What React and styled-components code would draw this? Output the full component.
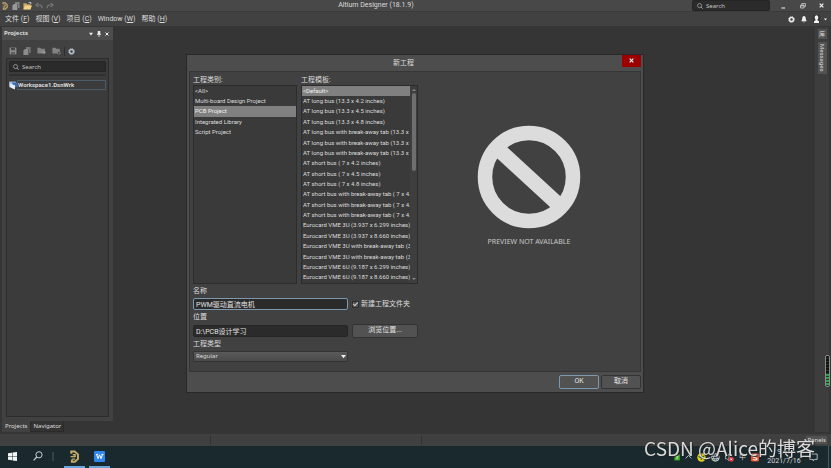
import React, { useState } from "react";
import styled, { createGlobalStyle } from "styled-components";

const categories = [
  "<All>",
  "Multi-board Design Project",
  "PCB Project",
  "Integrated Library",
  "Script Project",
];

const templates = [
  "<Default>",
  "AT long bus (13.3 x 4.2 inches)",
  "AT long bus (13.3 x 4.5 inches)",
  "AT long bus (13.3 x 4.8 inches)",
  "AT long bus with break-away tab (13.3 x 4.2 inches)",
  "AT long bus with break-away tab (13.3 x 4.5 inches)",
  "AT long bus with break-away tab (13.3 x 4.8 inches)",
  "AT short bus ( 7 x 4.2 inches)",
  "AT short bus ( 7 x 4.5 inches)",
  "AT short bus ( 7 x 4.8 inches)",
  "AT short bus with break-away tab ( 7 x 4.2 inches)",
  "AT short bus with break-away tab ( 7 x 4.5 inches)",
  "AT short bus with break-away tab ( 7 x 4.8 inches)",
  "Eurocard VME 3U (3.937 x 6.299 inches)",
  "Eurocard VME 3U (3.937 x 8.660 inches)",
  "Eurocard VME 3U with break-away tab (3.937 x 6.299 inches)",
  "Eurocard VME 3U with break-away tab (3.937 x 8.660 inches)",
  "Eurocard VME 6U (9.187 x 6.299 inches)",
  "Eurocard VME 6U (9.187 x 8.660 inches)",
];

const menus = [
  ["文件", "F"],
  ["视图", "V"],
  ["项目", "C"],
  ["Window", "W"],
  ["帮助", "H"],
];

/* icons */

const AltiumIcon = ({ size }) => (
  <svg width={size} height={size} viewBox="0 0 12 12" fill="none" stroke="#c9ab68" strokeWidth="1.8">
    <path d="M3 3.4V1.4h3.2L9.2 4v4.2L6.4 10.8H3.6V8.8" />
    <path d="M2.4 6.2h4.2V4.4H4.4M3.8 8.4h2.8" strokeWidth="1.2" />
  </svg>
);

const PagesIcon = ({ color = "#8c8c8c" }) => (
  <svg width="8" height="8" viewBox="0 0 8 8">
    <path d="M3 0h4.6v6H6V2H3z" fill={color} opacity="0.7" />
    <path d="M0.4 3.6L2 2h3.4v6H0.4z" fill={color} />
  </svg>
);

const FolderOpenIcon = () => (
  <svg width="9" height="8" viewBox="0 0 9 8">
    <path d="M0.4 1.2h3l0.8 1h3.4v5H0.4z" fill="#c9a45e" />
    <path d="M2 3.6h7L7.4 7.6H0.4z" fill="#f3d089" />
    <path d="M5.6 0.4h2.2v1.8" fill="none" stroke="#e8e8e8" strokeWidth="0.8" />
  </svg>
);

const UndoIcon = ({ flip }) => (
  <svg width="8" height="8" viewBox="0 0 8 8">
    <g transform={flip ? "matrix(-1 0 0 1 8 0)" : undefined}>
      <path d="M3.4 0.8L0.8 3l2.6 2.2" fill="none" stroke="#777" strokeWidth="1.1" />
      <path d="M1 3h3.4c1.8 0 2.6 1.2 2.6 3.2" fill="none" stroke="#777" strokeWidth="1.1" />
    </g>
  </svg>
);

const SearchIcon = ({ size = 6, color = "#aaa" }) => (
  <svg width={size} height={size} viewBox="0 0 8 8" fill="none" stroke={color}>
    <circle cx="3.4" cy="3.4" r="2.7" />
    <path d="M5.4 5.4L7.6 7.6" strokeWidth="1.2" />
  </svg>
);

const TaskSearchIcon = () => (
  <svg width="10" height="10" viewBox="0 0 10 10" fill="none" stroke="#c8cfd1">
    <circle cx="6" cy="3.8" r="3.1" />
    <path d="M3.8 6L0.6 9.4" strokeWidth="1.2" />
  </svg>
);

const SaveIcon = () => (
  <svg width="8" height="8" viewBox="0 0 8 8">
    <path d="M0.6 0.6h6.8v6.8H0.6z" fill="#8c8c8c" />
    <path d="M2 1h4v2.2H2zM2.2 5h3.6v2.4H2.2z" fill="#484848" />
    <path d="M2.6 5.6h2.8v0.8H2.6z" fill="#8c8c8c" />
  </svg>
);

const FolderIcon = ({ gear }) => (
  <svg width="9" height="8" viewBox="0 0 9 8">
    <path d="M0.4 0.8h3l0.8 1h3.6v4.6H0.4z" fill="#828282" />
    {gear ? (
      <circle cx="6.8" cy="5.8" r="1.4" fill="#444" stroke="#828282" strokeWidth="0.9" />
    ) : (
      <path d="M4 4.4h2.6V3L9 5.2 6.6 7.4V6H4z" fill="#949494" />
    )}
  </svg>
);

const GearIcon = ({ color, size = 7 }) => (
  <svg width={size} height={size} viewBox="0 0 8 8" fill="none" stroke={color}>
    <circle cx="4" cy="4" r="2.3" strokeWidth="1.6" />
    <circle cx="4" cy="4" r="3.4" strokeWidth="0.9" strokeDasharray="1.33 1.33" />
  </svg>
);

const BellIcon = () => (
  <svg width="6" height="7" viewBox="0 0 6 7" fill="#eee">
    <path d="M3 0c1.4 0.3 1.8 1.3 1.8 2.6 0 1.3 0.4 1.9 1 2.6H0.2c0.6-0.7 1-1.3 1-2.6C1.2 1.3 1.6 0.3 3 0zM2.2 5.8h1.6L3 6.8z" />
  </svg>
);

const UserIcon = () => (
  <svg width="7" height="8" viewBox="0 0 7 8">
    <rect width="7" height="8" fill="#333" />
    <path d="M3.5 0.2a1.9 2.3 0 0 1 1 4.2v0.9L6 6.2V8H1V6.2l1.5-0.9V4.4a1.9 2.3 0 0 1 1-4.2z" fill="#f2f2f2" />
  </svg>
);

const CrossIcon = ({ size = 5 }) => (
  <svg width={size} height={size} viewBox="0 0 6 6" stroke="#f0f0f0" strokeWidth="1.5">
    <path d="M0.8 0.8l4.4 4.4M5.2 0.8L0.8 5.2" />
  </svg>
);

const RestoreIcon = () => (
  <svg width="6" height="6" viewBox="0 0 6 6" fill="none" stroke="#ccc" strokeWidth="0.9">
    <path d="M1.8 1.8V0.6h3.6v2.8H4.2M0.6 2.2h3.4v2.8H0.6zM0.6 2.8h3.4" />
  </svg>
);

const MinimizeIcon = () => (
  <svg width="5" height="6" viewBox="0 0 5 6">
    <path d="M0.5 5h3.6" stroke="#ddd" strokeWidth="1.2" />
  </svg>
);

const CaretIcon = ({ size = 4 }) => (
  <svg width={size} height={size} viewBox="0 0 4 4">
    <path d="M0 0.8h4L2 3.4z" fill="#eee" />
  </svg>
);

const PinIcon = () => (
  <svg width="4" height="6" viewBox="0 0 4 6">
    <path d="M0.8 0h2.4v2.8H4v0.9H2.4V6H1.6V3.7H0V2.8h0.8z" fill="#eee" />
  </svg>
);

const WorkspaceIcon = () => (
  <svg width="8" height="9" viewBox="0 0 8 9">
    <path d="M0.2 0.6h6.6v5.6H0.2z" fill="#a9c3e6" />
    <path d="M3 1.4h5v4.6H4.4z" fill="#3c6fb4" />
    <path d="M0.6 2.4l5.4 1.8v4.4L1.6 6.8z" fill="#e9eef6" />
  </svg>
);

const NoPreviewIcon = () => (
  <svg width="104" height="104" viewBox="0 0 104 104" fill="none" stroke="#dcdcdc">
    <circle cx="52" cy="52" r="44" strokeWidth="14.5" />
    <path d="M21 24L83 81" strokeWidth="15" />
  </svg>
);

const WindowsIcon = () => (
  <svg width="9" height="9" viewBox="0 0 9 9" fill="#f4f6f6">
    <path d="M0 1.3L4 0.7v3.5H0zM4.5 0.6L9 0v4.2H4.5zM0 4.7h4v3.6L0 7.7zM4.5 4.7H9V9L4.5 8.4z" />
  </svg>
);

const WpsIcon = () => (
  <svg width="11" height="11" viewBox="0 0 11 11">
    <rect width="11" height="11" rx="1" fill="#2f86ee" />
    <path d="M2 3.4h2M7.4 3.4h2M2.6 3.4l1.4 4.2 1.5-3.8L7 7.6l1.6-4.2" fill="none" stroke="#fff" />
  </svg>
);

const ShieldTrayIcon = () => (
  <svg width="6" height="8" viewBox="0 0 6 8">
    <path d="M0.4 1.4h5.4v6H0.4z" fill="#3fb32b" />
    <path d="M3 2.4v3.8M1.8 3.4h2.6" stroke="#d8f5cb" strokeWidth="0.9" />
  </svg>
);

const ChevronUpIcon = () => (
  <svg width="7" height="8" viewBox="0 0 7 8">
    <path d="M0.6 5.4l2.9-3 2.9 3" fill="none" stroke="#b9c3c5" />
  </svg>
);

const YellowTrayIcon = () => (
  <svg width="9" height="9" viewBox="0 0 9 9">
    <circle cx="4.5" cy="4.5" r="4.2" fill="#e8d21f" />
    <path d="M1.4 3.4l2.8 1.4 3.4-2M4.3 4.8V7" fill="none" stroke="#31662a" strokeWidth="1.1" />
  </svg>
);

const GlobeIcon = () => (
  <svg width="9" height="9" viewBox="0 0 9 9" fill="none" stroke="#d5dadb" strokeWidth="0.9">
    <circle cx="4.4" cy="4.4" r="3.8" />
    <path d="M0.6 3.2h7.6M0.6 5.8h7.6M4.4 0.6c-2.4 2.4-2.4 5.2 0 7.6 2.4-2.4 2.4-5.2 0-7.6z" />
  </svg>
);

const MutedIcon = () => (
  <svg width="9" height="9" viewBox="0 0 9 9">
    <path d="M0.5 3h1.4l2-1.8v6.4l-2-1.8H0.5z" fill="none" stroke="#b9c3c5" strokeWidth="0.8" />
    <circle cx="6.3" cy="6.3" r="2.5" fill="#d9343c" />
    <path d="M5.4 5.4l1.8 1.8M7.2 5.4L5.4 7.2" stroke="#fff" strokeWidth="0.8" />
  </svg>
);

const SogouIcon = () => (
  <svg width="8" height="9" viewBox="0 0 8 9">
    <rect y="0.6" width="8" height="8" rx="1.4" fill="#e8502a" />
    <path d="M6.2 2.6C4.4 1.6 2 2 2 3.4c0 1.6 4 0.8 4 2.4 0 1.4-2.6 1.6-4.2 0.6" fill="none" stroke="#fff" strokeWidth="1.1" />
  </svg>
);

const NoticeIcon = () => (
  <svg width="9" height="9" viewBox="0 0 9 9" fill="none" stroke="#aeb9bb">
    <path d="M0.8 1h7.4v5.4H5.6L4.2 8V6.4H0.8z" />
  </svg>
);

function ListBox({ label, items, initial, scroll }) {
  const [selected, setSelected] = useState(initial);

  return (
    <ListColumn $wide={scroll}>
      <Label as="span">{label}</Label>
      <ListFrame>
        <Rows aria-label={label}>
          {items.map((item, i) => (
            <Row key={i} type="button" $selected={i === selected} onClick={() => setSelected(i)}>
              {item}
            </Row>
          ))}
        </Rows>
        {scroll && (
          <ScrollTrack>
            <ScrollArrow $up />
            <ScrollThumb />
            <ScrollArrow />
          </ScrollTrack>
        )}
      </ListFrame>
    </ListColumn>
  );
}

function NewProjectDialog() {
  return (
    <Dialog role="dialog" aria-label="新工程">
      <DialogTitle>
        <span>新工程</span>
        <CloseButton type="button" aria-label="Close">
          <CrossIcon />
        </CloseButton>
      </DialogTitle>
      <DialogBody>
        <Form>
          <Lists>
            <ListBox label="工程类别:" items={categories} initial={2} />
            <ListBox label="工程模板:" items={templates} initial={0} scroll />
          </Lists>
          <Fields>
            <Label htmlFor="name">名称</Label>
            <TextInput id="name" defaultValue="PWM驱动直流电机" $focused />
            <CheckLabel>
              <CheckBox type="checkbox" defaultChecked />
              新建工程文件夹
            </CheckLabel>
            <Label htmlFor="place">位置</Label>
            <TextInput id="place" defaultValue="D:\PCB设计学习" />
            <Button type="button">浏览位置...</Button>
            <Label htmlFor="kind">工程类型</Label>
            <SelectWrap>
              <Select id="kind" defaultValue="Regular">
                <option>Regular</option>
              </Select>
              <SelectArrow>
                <CaretIcon size={5} />
              </SelectArrow>
            </SelectWrap>
          </Fields>
        </Form>
        <Preview>
          <NoPreviewIcon />
          <span>PREVIEW NOT AVAILABLE</span>
        </Preview>
      </DialogBody>
      <DialogFooter>
        <Button type="button" $primary>OK</Button>
        <Button type="button">取消</Button>
      </DialogFooter>
    </Dialog>
  );
}

function App() {
  return (
    <Screen>
      <GlobalStyle />
      <TitleBar>
        <QuickTools>
          <AltiumIcon size={8} />
          <PagesIcon color="#999" />
          <FolderOpenIcon />
          <UndoIcon />
          <UndoIcon flip />
        </QuickTools>
        <AppTitle>Altium Designer (18.1.9)</AppTitle>
        <TitleRight>
          <TitleSearch>
            <SearchIcon />
            <input aria-label="Search" placeholder="Search" />
          </TitleSearch>
          <WindowButton type="button" aria-label="Minimize"><MinimizeIcon /></WindowButton>
          <WindowButton type="button" aria-label="Restore"><RestoreIcon /></WindowButton>
          <WindowButton type="button" aria-label="Close"><CrossIcon /></WindowButton>
        </TitleRight>
      </TitleBar>

      <MenuBar>
        {menus.map(([name, key]) => (
          <MenuItem key={key} type="button">
            {name} (<u>{key}</u>)
          </MenuItem>
        ))}
        <MenuIcons>
          <GearIcon color="#eee" />
          <BellIcon />
          <UserGroup>
            <UserIcon />
            <CaretIcon size={3} />
          </UserGroup>
        </MenuIcons>
      </MenuBar>

      <Workspace>
        <Side>
          <Panel>
            <PanelHeader>
              <b>Projects</b>
              <CaretIcon />
              <PinIcon />
              <CrossIcon size={4} />
            </PanelHeader>
            <PanelTools>
              <SaveIcon />
              <PagesIcon />
              <FolderIcon />
              <FolderIcon gear />
              <Divider />
              <GearIcon color="#b4c3cd" />
            </PanelTools>
            <Tree>
              <PanelSearch>
                <SearchIcon />
                <input aria-label="Search projects" placeholder="Search" />
              </PanelSearch>
              <TreeLine />
              <TreeItem>
                <WorkspaceIcon />
                <b>Workspace1.DsnWrk</b>
              </TreeItem>
            </Tree>
          </Panel>
          <Tabs>
            <Tab type="button" $active>Projects</Tab>
            <Tab type="button">Navigator</Tab>
          </Tabs>
        </Side>
        <RightBar>
          <SideTab type="button">库</SideTab>
          <SideTab type="button">Messages</SideTab>
        </RightBar>
      </Workspace>

      <StatusBar>
        <StatusCell />
        <StatusCell />
        <StatusCell $last>
          <PanelsButton type="button">Panels</PanelsButton>
        </StatusCell>
      </StatusBar>

      <TaskBar>
        <TaskButton type="button" aria-label="Start"><WindowsIcon /></TaskButton>
        <TaskButton type="button" aria-label="Search"><TaskSearchIcon /></TaskButton>
        <TaskDivider />
        <TaskButton type="button" aria-label="Altium Designer" $open><AltiumIcon size={13} /></TaskButton>
        <TaskButton type="button" aria-label="WPS" $open><WpsIcon /></TaskButton>
        <Tray>
          <ShieldTrayIcon />
          <ChevronUpIcon />
          <YellowTrayIcon />
          <GlobeIcon />
          <MutedIcon />
          <span>中</span>
          <SogouIcon />
          <Clock>
            <span>9:41</span>
            <span>2021/7/16</span>
          </Clock>
          <NoticeIcon />
        </Tray>
      </TaskBar>

      <Overlay>
        <NewProjectDialog />
      </Overlay>
      <Meter />
      <Watermark>CSDN @Alice的博客</Watermark>
    </Screen>
  );
}

export default App;

const GlobalStyle = createGlobalStyle`
  * {
    box-sizing: border-box;
  }

  body {
    margin: 0;
    background: #353535;
  }

  body, button, input, select {
    font-family: Roboto, "Noto Sans CJK SC", sans-serif;
    font-size: 7px;
    line-height: 9px;
    color: #dcdcdc;
  }

  button, input, select {
    margin: 0;
    padding: 0;
    border: none;
    background: none;
    outline: none;
  }

  input::placeholder {
    color: #c4c4c4;
    opacity: 1;
  }

  svg {
    display: block;
    flex: none;
  }
`;

const Screen = styled.div`
  display: flex;
  flex-direction: column;
  min-height: 100vh;
  overflow: hidden;
`;

const TitleBar = styled.header`
  display: grid;
  grid-template-columns: 1fr auto 1fr;
  align-items: center;
  height: 12px;
  padding-left: 1px;
  background: #484848;
  border-bottom: 1px solid #3a3a3a;
`;

const QuickTools = styled.div`
  display: flex;
  align-items: center;
  gap: 3px;
`;

const AppTitle = styled.div`
  padding-right: 80px;
`;

const TitleRight = styled.div`
  display: flex;
  justify-content: flex-end;
  align-items: center;
`;

const SearchBox = styled.div`
  display: flex;
  align-items: center;
  gap: 3px;
  height: 11px;
  padding: 0 4px;
  background: #2b2b2b;
  border: 1px solid #242424;
  border-radius: 2px;

  input {
    min-width: 0;
    flex: 1;
    font: 6px/8px "Noto Sans", sans-serif;
  }
`;

const TitleSearch = styled(SearchBox)`
  width: 78px;
  margin-right: 4px;
`;

const WindowButton = styled.button`
  display: flex;
  justify-content: center;
  width: 19px;
`;

const MenuBar = styled.nav`
  display: flex;
  align-items: center;
  gap: 6px;
  height: 14px;
  padding: 0 4px 0 5px;
  background: #414141;
`;

const MenuItem = styled.button`
  white-space: nowrap;
`;

const MenuIcons = styled.div`
  display: flex;
  align-items: center;
  gap: 6px;
  margin-left: auto;
`;

const UserGroup = styled.div`
  display: flex;
  align-items: center;
  gap: 4px;
`;

const Workspace = styled.main`
  display: flex;
  justify-content: space-between;
  flex: 1;
  padding: 1px 2px 2px;
`;

const Side = styled.aside`
  display: flex;
  flex-direction: column;
  width: 111px;
`;

const Panel = styled.section`
  display: flex;
  flex-direction: column;
  flex: 1;
  background: #414141;
`;

const PanelHeader = styled.div`
  display: flex;
  align-items: center;
  gap: 4px;
  height: 13px;
  padding: 0 4px 0 2px;
  background: #4d4d4d;

  b {
    flex: 1;
    font-size: 6px;
    font-family: "Noto Sans", sans-serif;
  }
`;

const PanelTools = styled.div`
  display: flex;
  align-items: center;
  gap: 6px;
  height: 18px;
  padding: 4px 7px 0;
`;

const Divider = styled.i`
  width: 1px;
  height: 9px;
  margin: 0 -3px;
  background: #2e2e2e;
`;

const Tree = styled.div`
  flex: 1;
  margin: 0 4px 4px;
  padding: 2px;
  background: #3b3b3b;
  border: 1px solid #2c2c2c;
`;

const PanelSearch = styled(SearchBox)`
  padding: 0 3px;
`;

const TreeLine = styled.div`
  height: 2px;
  margin: 2px 0 4px;
  background: #303030;
`;

const TreeItem = styled.div`
  display: flex;
  align-items: center;
  height: 10px;

  b {
    flex: 1;
    border: 1px solid #4c5b6a;
    font-size: 6px;
    line-height: 8px;
  }
`;

const Tabs = styled.div`
  display: flex;
  height: 11px;
`;

const Tab = styled.button`
  padding: 0 2px;
  background: ${(p) => (p.$active ? "#414141" : "#333")};
  border: 1px solid ${(p) => (p.$active ? "#414141" : "#2a2a2a")};
  border-top: none;
  font: 6px/10px "Noto Sans", sans-serif;
`;

const RightBar = styled.aside`
  display: flex;
  flex-direction: column;
  align-items: center;
  gap: 3px;
  width: 14px;
  padding-top: 2px;
  background: #3d3d3d;
`;

const SideTab = styled.button`
  width: 9px;
  padding: 2px 0;
  writing-mode: vertical-rl;
  background: #525252;
  font-size: 6px;
`;

const StatusBar = styled.footer`
  display: flex;
  height: 12px;
  padding-right: 4px;
  background: #404040;
`;

const StatusCell = styled.div`
  display: flex;
  justify-content: flex-end;
  align-items: center;
  flex: ${(p) => (p.$last ? "1" : "0 0 211px")};
  margin: 2px 0;
  border-right: ${(p) => (p.$last ? "none" : "1px solid #303030")};
`;

const PanelsButton = styled.button`
  padding: 0 1px;
  background: #525252;
  font: 6px/8px "Noto Sans", sans-serif;
`;

const TaskBar = styled.footer`
  display: flex;
  align-items: stretch;
  height: 22px;
  padding-right: 2px;
  background: #19292e;
`;

const TaskButton = styled.button`
  display: flex;
  justify-content: center;
  align-items: center;
  width: ${(p) => (p.$open ? 21 : 25)}px;
  margin-right: ${(p) => (p.$open ? 4 : 0)}px;
  border-bottom: 2px solid ${(p) => (p.$open ? "#67a5d8" : "transparent")};
`;

const TaskDivider = styled.i`
  width: 2px;
  height: 9px;
  margin: 6px 10px 0 2px;
  background: #304348;
`;

const Tray = styled.div`
  display: flex;
  align-items: center;
  gap: 5px;
  margin-left: auto;
  padding-right: 10px;
  border-right: 1px solid #4b595d;
`;

const Clock = styled.div`
  display: flex;
  flex-direction: column;
  align-items: center;
  width: 32px;
  margin: 0 4px;
`;

const Overlay = styled.div`
  position: fixed;
  inset: 0;
  display: flex;
  justify-content: center;
  align-items: center;
  padding: 0 1px 22px 0;
`;

const Dialog = styled.section`
  width: 55%;
  min-width: 458px;
  background: #4d4d4d;
  border: 1px solid #282828;
`;

const DialogTitle = styled.header`
  display: flex;
  height: 16px;
  padding: 0 2px;
  line-height: 16px;

  span {
    flex: 1;
    padding-right: 4px;
    text-align: center;
  }
`;

const CloseButton = styled.button`
  display: flex;
  justify-content: center;
  align-items: center;
  width: 19px;
  height: 12px;
  background: #9c0000;
`;

const DialogBody = styled.div`
  display: flex;
  margin: 0 2px;
  padding: 4px 3px 9px;
  background: #414141;
  border: 1px solid #363636;
`;

const Form = styled.form`
  display: flex;
  flex-direction: column;
  gap: 3px;
`;

const Lists = styled.div`
  display: flex;
  gap: 4px;
`;

const ListColumn = styled.div`
  display: flex;
  flex-direction: column;
  width: ${(p) => (p.$wide ? 117 : 104)}px;
`;

const Label = styled.label`
  display: block;
  line-height: 9px;
`;

const ListFrame = styled.div`
  display: flex;
  height: 199px;
  background: #3a3a3a;
  border: 1px solid #2c2c2c;
`;

const Rows = styled.div`
  display: grid;
  grid-template-rows: repeat(19, 1fr);
  flex: 1;
  min-width: 0;
`;

const Row = styled.button`
  padding: 0 1px;
  overflow: hidden;
  white-space: nowrap;
  text-align: left;
  font: 6px/8px Roboto, sans-serif;
  background: ${(p) => (p.$selected ? "#808080" : "transparent")};
  color: ${(p) => (p.$selected ? "#f0f0f0" : "#dcdcdc")};
`;

const ScrollTrack = styled.div`
  display: flex;
  flex-direction: column;
  align-items: center;
  gap: 2px;
  width: 7px;
  padding: 3px 0;
  background: #3e3e3e;
`;

const ScrollThumb = styled.div`
  width: 4px;
  height: 78px;
  margin-bottom: auto;
  background: #6e6e6e;
  border-radius: 2px;
`;

const ScrollArrow = styled.i`
  border: 2px solid transparent;
  border-top-width: ${(p) => (p.$up ? 0 : 2)}px;
  border-bottom-width: ${(p) => (p.$up ? 2 : 0)}px;
  border-top-color: #888;
  border-bottom-color: #888;
`;

const Fields = styled.div`
  display: grid;
  grid-template-columns: 155px 66px;
  column-gap: 4px;
  row-gap: 2px;
  align-items: center;

  ${Label} {
    grid-column: 1 / -1;
  }
`;

const TextInput = styled.input`
  height: 12px;
  padding: 0 2px;
  background: #2b2b2b;
  border: 1px solid ${(p) => (p.$focused ? "#7c99b0" : "#262626")};
  border-radius: 2px;
  color: #e2e2e2;
`;

const CheckLabel = styled.label`
  display: flex;
  align-items: center;
  gap: 2px;
  height: 13px;
  white-space: nowrap;
`;

const CheckBox = styled.input`
  appearance: none;
  width: 7px;
  height: 7px;
  background: #555;
  border: 1px solid #2e2e2e;

  &:checked::before {
    content: "";
    display: block;
    width: 4px;
    height: 2px;
    border: solid #ccc;
    border-width: 0 0 1px 1px;
    transform: rotate(-45deg);
  }
`;

const Button = styled.button`
  height: 14px;
  background: #525252;
  border: 1px solid ${(p) => (p.$primary ? "#7c99b0" : "#333")};
  border-radius: 2px;
  color: #e2e2e2;
`;

const SelectWrap = styled.div`
  position: relative;
`;

const Select = styled.select`
  display: block;
  appearance: none;
  width: 100%;
  height: 11px;
  padding: 0 2px;
  background: linear-gradient(#5a5a5a, #4a4a4a);
  border: 1px solid #333;
  border-radius: 1px;
  font: 6px/8px "Noto Sans", sans-serif;
`;

const SelectArrow = styled.span`
  position: absolute;
  top: 3px;
  right: 2px;
  pointer-events: none;
`;

const Preview = styled.div`
  display: flex;
  flex-direction: column;
  align-items: center;
  gap: 8px;
  flex: 1;
  padding: 49px 0 0 3px;
  font-family: "Noto Sans", sans-serif;
  color: #c8c8c8;
`;

const DialogFooter = styled.footer`
  display: flex;
  justify-content: flex-end;
  gap: 2px;
  padding: 3px 2px;

  ${Button} {
    width: 40px;
  }
`;

const Meter = styled.div`
  position: fixed;
  top: 355px;
  right: 1px;
  width: 5px;
  height: 32px;
  border: 1px solid #8a8a8a;
  border-radius: 2px;
  background:
    repeating-linear-gradient(transparent 0 2px, #1c3b25 2px 3px),
    linear-gradient(#111 18px, #2fa04f 18px);
`;

const Watermark = styled.div`
  position: fixed;
  right: 16px;
  bottom: 5px;
  font-family: "Noto Sans CJK SC", sans-serif;
  font-size: 19px;
  line-height: 30px;
  color: #d8d8d8;
  text-shadow: 1px 1px 1px #222;
  pointer-events: none;
`;
